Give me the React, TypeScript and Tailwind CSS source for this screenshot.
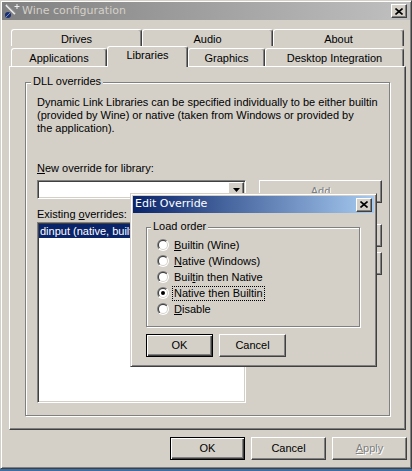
import type { ReactNode } from 'react';

const raised =
  'border border-t-white border-l-white border-r-[#404040] border-b-[#404040] shadow-[inset_-1px_-1px_0_#808080]';
const raisedDefault =
  'border border-black shadow-[inset_1px_1px_0_#fff,inset_-1px_-1px_0_#404040,inset_-2px_-2px_0_#808080]';
const sunken =
  'border border-t-[#808080] border-l-[#808080] border-r-white border-b-white shadow-[inset_1px_1px_0_#404040,inset_-1px_-1px_0_#d4d0c8]';
const etched =
  'border border-[#808080] shadow-[inset_1px_1px_0_#fff,1px_1px_0_#fff]';
const greyed = 'text-[#808080] [text-shadow:1px_1px_0_#fff]';

function Button({
  children,
  className = '',
  isDefault = false,
  disabled = false,
}: {
  children?: ReactNode;
  className?: string;
  isDefault?: boolean;
  disabled?: boolean;
}) {
  return (
    <div
      className={`flex items-center justify-center h-[23px] bg-[#d4d0c8] ${
        isDefault ? raisedDefault : raised
      } ${disabled ? greyed : 'text-black'} ${className}`}
    >
      {children}
    </div>
  );
}

function CloseBox() {
  return (
    <div
      className={`w-[16px] h-[14px] flex items-center justify-center bg-[#d4d0c8] ${raised}`}
    >
      <svg width="8" height="7" viewBox="0 0 8 7">
        <path d="M0.5 0.5 L7.5 6.5 M7.5 0.5 L0.5 6.5" stroke="#000" strokeWidth="1.6" />
      </svg>
    </div>
  );
}

function Tab({ w, label, active = false }: { w: string; label: string; active?: boolean }) {
  return (
    <div
      className={`${w} ${
        active ? 'h-[21px] -mb-px relative z-10 pb-[3px]' : 'h-full pt-[2px]'
      } flex items-center justify-center bg-[#d4d0c8] rounded-t-[3px] border-t border-l border-r border-t-white border-l-white border-r-[#404040] shadow-[inset_-1px_0_0_#808080]`}
    >
      {label}
    </div>
  );
}

function Radio({
  label,
  checked = false,
  focused = false,
}: {
  label: ReactNode;
  checked?: boolean;
  focused?: boolean;
}) {
  return (
    <div className="flex items-center h-[16px]">
      <div className="w-[12px] h-[12px] rounded-full p-px bg-[linear-gradient(135deg,#808080_50%,#ffffff_50%)]">
        <div className="w-full h-full rounded-full p-px bg-[linear-gradient(135deg,#404040_50%,#d4d0c8_50%)]">
          <div className="w-full h-full rounded-full bg-white flex items-center justify-center">
            {checked && <div className="w-[4px] h-[4px] rounded-full bg-black" />}
          </div>
        </div>
      </div>
      <span
        className={`ml-[3px] px-px leading-[13px] border ${
          focused ? 'border-dotted border-black' : 'border-transparent'
        }`}
      >
        {label}
      </span>
    </div>
  );
}

function WineIcon() {
  return (
    <svg width="16" height="16" viewBox="0 0 16 16">
      <path d="M2 2 L11 11" stroke="#e8e8e8" strokeWidth="2" />
      <path d="M3 2 L12 11" stroke="#9a9a9a" strokeWidth="0.8" />
      <circle cx="4" cy="12" r="3" fill="#1c2f6e" />
      <path d="M2 14 L6 10" stroke="#6d8fd0" strokeWidth="1" />
      <path d="M13 1 V6 M10.5 3.5 H15.5" stroke="#f0f0f0" strokeWidth="1" />
    </svg>
  );
}

function EditOverrideDialog() {
  return (
    <div className="absolute left-[130px] top-[193px] w-[247px] h-[174px] bg-[#d4d0c8] border border-t-[#d4d0c8] border-l-[#d4d0c8] border-r-[#404040] border-b-[#404040] shadow-[inset_1px_1px_0_#fff,inset_-1px_-1px_0_#808080] p-[2px] flex flex-col">
      <div className="h-[17px] flex items-center pl-[2px] pr-[2px] bg-[linear-gradient(90deg,#0a246a,#a6caf0)]">
        <span className="font-['DejaVu_Sans',sans-serif] text-[11px] text-white">Edit Override</span>
        <div className="ml-auto">
          <CloseBox />
        </div>
      </div>
      <div className={`relative ml-[13px] mt-[14px] w-[214px] h-[100px] ${etched} pt-[9px] pl-[10px]`}>
        <span className="absolute -top-[8px] left-[4px] px-[2px] bg-[#d4d0c8] leading-[13px]">
          Load order
        </span>
        <Radio label={<><u>B</u>uiltin (Wine)</>} />
        <Radio label={<><u>N</u>ative (Windows)</>} />
        <Radio label={<>Buil<u>t</u>in then Native</>} />
        <Radio label="Native then Builtin" checked focused />
        <Radio label={<><u>D</u>isable</>} />
      </div>
      <div className="flex gap-[6px] ml-[13px] mt-[7px]">
        <Button isDefault className="w-[67px]">OK</Button>
        <Button className="w-[67px]">Cancel</Button>
      </div>
    </div>
  );
}

export default function App() {
  return (
    <div className="relative w-[412px] h-[471px] bg-[#3a6ea5] overflow-hidden font-['Liberation_Sans',sans-serif] text-[11px] text-black">
      <div className="w-[412px] h-[469px] bg-[#d4d0c8] border border-t-[#d4d0c8] border-l-[#d4d0c8] border-r-[#404040] border-b-[#404040] shadow-[inset_1px_1px_0_#fff,inset_-1px_-1px_0_#808080] p-px flex flex-col">
        {/* title bar */}
        <div className="h-[18px] flex items-center pl-[2px] pr-[3px] bg-[linear-gradient(90deg,#808080,#c0c0c0)]">
          <WineIcon />
          <span className="ml-[2px] font-['DejaVu_Sans',sans-serif] text-[11px] text-[#d4d0c8]">
            Wine configuration
          </span>
          <div className="ml-auto">
            <CloseBox />
          </div>
        </div>

        {/* tabs */}
        <div className="mt-[9px] ml-[9px] flex flex-col">
          <div className="flex h-[17px]">
            <Tab w="w-[131px]" label="Drives" />
            <Tab w="w-[131px]" label="Audio" />
            <Tab w="w-[131px]" label="About" />
          </div>
          <div className="flex items-end h-[20px]">
            <div className="flex h-[18px]">
              <Tab w="w-[96px]" label="Applications" />
            </div>
            <Tab w="w-[81px]" label="Libraries" active />
            <div className="flex h-[18px]">
              <Tab w="w-[77px]" label="Graphics" />
              <Tab w="w-[139px]" label="Desktop Integration" />
            </div>
          </div>
        </div>

        {/* tab panel */}
        <div className="ml-[7px] w-[397px] h-[364px] border border-t-white border-l-white border-r-[#404040] border-b-[#404040] shadow-[inset_-1px_-1px_0_#808080] pt-[15px] pl-[15px]">
          <div className={`relative w-[365px] h-[334px] ${etched} pt-[13px] pl-[11px]`}>
            <span className="absolute -top-[8px] left-[5px] px-[2px] bg-[#d4d0c8] leading-[13px]">
              DLL overrides
            </span>
            <p className="leading-[13px] whitespace-nowrap">
              Dynamic Link Libraries can be specified individually to be either builtin
              <br />
              (provided by Wine) or native (taken from Windows or provided by
              <br />
              the application).
            </p>
            <div className="flex mt-[27px]">
              <div className="w-[209px] flex flex-col">
                <span className="leading-[13px]">
                  <u>N</u>ew override for library:
                </span>
                <div className={`mt-[5px] h-[19px] bg-white p-px flex justify-end ${sunken}`}>
                  <div className={`w-[16px] h-full flex items-center justify-center bg-[#d4d0c8] ${raised}`}>
                    <svg width="7" height="4" viewBox="0 0 7 4">
                      <path d="M0 0 H7 L3.5 4 Z" fill="#000" />
                    </svg>
                  </div>
                </div>
                <span className="mt-[9px] leading-[13px]">
                  Existing <u>o</u>verrides:
                </span>
                <div className={`mt-[1px] h-[181px] bg-white p-px ${sunken}`}>
                  <div className="h-[14px] bg-[#0a246a] text-white pl-px leading-[14px] whitespace-nowrap">
                    dinput (native, builtin)
                  </div>
                </div>
              </div>
              <div className="ml-[13px] w-[123px] flex flex-col pt-[18px]">
                <Button disabled>Add</Button>
                <Button className="mt-[21px]">Edit...</Button>
                <Button className="mt-[5px]">Remove</Button>
              </div>
            </div>
          </div>
        </div>

        {/* bottom buttons */}
        <div className="mt-[7px] flex justify-end gap-[6px] pr-[3px]">
          <Button isDefault className="w-[75px]">OK</Button>
          <Button className="w-[75px]">Cancel</Button>
          <Button disabled className="w-[75px]">
            <span>
              <u>A</u>pply
            </span>
          </Button>
        </div>
      </div>
      <EditOverrideDialog />
    </div>
  );
}
